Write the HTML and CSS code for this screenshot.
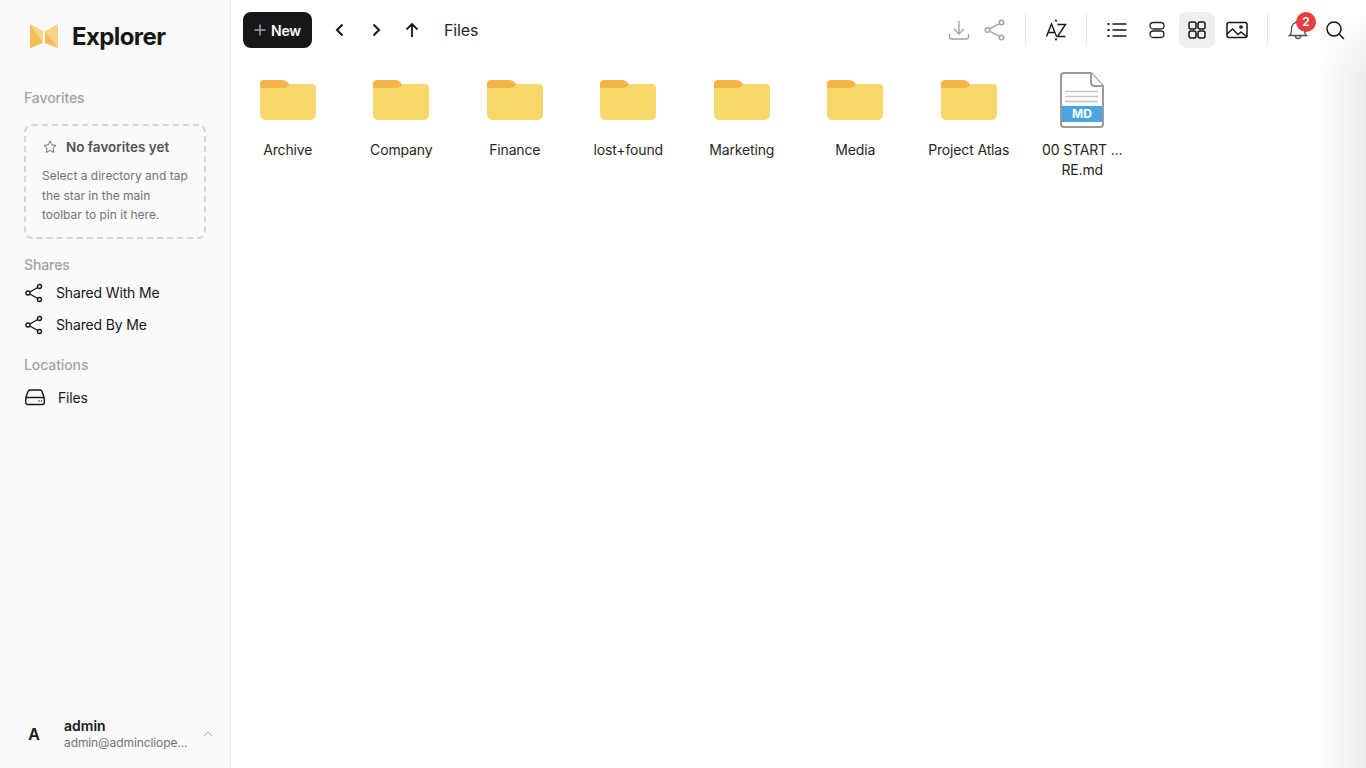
FILE: index.html
```html
<!DOCTYPE html>
<html lang="en">
<head>
	<meta charset="UTF-8">
	<title>Explorer</title>
	<link rel="stylesheet" href="styles.css">
</head>
<body>
	<div class="app">
		<aside class="sidebar">
			<div class="brand">
				<svg class="brand-logo" width="28" height="24" viewBox="0 0 28 24">
					<path fill="#f8d584" d="M0 0 L13 7 V19 L0 24 Z"/>
					<path fill="#f3bd5c" d="M0 0 L13 19 L0 24 Z"/>
					<path fill="#f8d584" d="M28 0 L15 7 V19 L28 24 Z"/>
					<path fill="#f3bd5c" d="M15 7 L28 24 L15 19 Z"/>
				</svg>
				<span class="brand-name">Explorer</span>
			</div>

			<h2 class="side-title">Favorites</h2>
			<div class="fav-box">
				<div class="fav-head">
					<svg width="16" height="16" viewBox="0 0 24 24" fill="none" stroke="#737373" stroke-width="1.5" stroke-linejoin="round"><path d="M12 3l2.700 5.800 6.300.8-4.600 4.300 1.200 6.300L12 17.100 6.400 20.200l1.200-6.300L3 9.600l6.300-.8z"/></svg>
					<span>No favorites yet</span>
				</div>
				<p>Select a directory and tap the star in the main toolbar to pin it here.</p>
			</div>

			<h2 class="side-title shares">Shares</h2>
			<a class="side-link">
				<svg class="share-icon" width="20" height="20" viewBox="0 0 20 20" fill="none" stroke="#171717" stroke-width="1.4"><circle cx="4" cy="10" r="2"/><circle cx="15.500" cy="3.500" r="2"/><circle cx="15.500" cy="16.500" r="2"/><path d="M5.800 9 13.700 4.500M5.800 11l7.900 4.500"/></svg>
				<span>Shared With Me</span>
			</a>
			<a class="side-link">
				<svg class="share-icon" width="20" height="20" viewBox="0 0 20 20" fill="none" stroke="#171717" stroke-width="1.4"><circle cx="4" cy="10" r="2"/><circle cx="15.500" cy="3.500" r="2"/><circle cx="15.500" cy="16.500" r="2"/><path d="M5.800 9 13.700 4.500M5.800 11l7.900 4.500"/></svg>
				<span>Shared By Me</span>
			</a>

			<h2 class="side-title locations">Locations</h2>
			<a class="side-link files-link">
				<svg width="22" height="20" viewBox="0 0 22 20" fill="none" stroke="#171717" stroke-width="1.4" stroke-linejoin="round"><path d="M1.700 11 4 4.500Q4.400 3 6 3h10q1.600 0 2 1.500L20.300 11"/><rect x="1.700" y="10.500" width="18.600" height="7" rx="2"/><path d="M15 14h.01M17.500 14h.01" stroke-linecap="round"/></svg>
				<span>Files</span>
			</a>

			<div class="user">
				<div class="user-avatar">A</div>
				<div class="user-info">
					<div class="user-name">admin</div>
					<div class="user-mail">admin@admincliope...</div>
				</div>
				<svg class="user-arrow" width="12" height="12" viewBox="0 0 12 12" fill="none" stroke="#a3a3a3" stroke-width="1"><path d="M2 8l4-4 4 4"/></svg>
			</div>
		</aside>

		<main class="main">
			<div class="toolbar">
				<button class="btn-new">
					<svg width="14" height="14" viewBox="0 0 14 14" stroke="#a3a3a3" stroke-width="1.500"><path d="M7 1.500v11M1.500 7h11"/></svg>
					<span>New</span>
				</button>
				<div class="tool-group nav-group">
					<button class="tool"><svg width="20" height="20" viewBox="0 0 20 20" fill="none" stroke="#171717" stroke-width="2"><path d="M12.500 4.500 7 10l5.500 5.500"/></svg></button>
					<button class="tool"><svg width="20" height="20" viewBox="0 0 20 20" fill="none" stroke="#171717" stroke-width="2"><path d="M7.500 4.500 13 10l-5.500 5.500"/></svg></button>
					<button class="tool"><svg width="20" height="20" viewBox="0 0 20 20" fill="none" stroke="#171717" stroke-width="1.800"><path d="M10 17V4M4.500 9.500 10 4l5.500 5.500"/></svg></button>
				</div>
				<span class="crumb">Files</span>

				<div class="tool-group tools-right">
					<button class="tool"><svg width="22" height="22" viewBox="0 0 22 22" fill="none" stroke="#a3a3a3" stroke-width="1.400"><path d="M11 2v13M6 10l5 5 5-5M1.500 15v3q0 2 2 2h15q2 0 2-2v-3"/></svg></button>
					<button class="tool"><svg width="22" height="22" viewBox="0 0 22 22" fill="none" stroke="#a3a3a3" stroke-width="1.400"><circle cx="3.500" cy="11" r="2.300"/><circle cx="17.500" cy="3.500" r="2.300"/><circle cx="17.500" cy="18.500" r="2.300"/><path d="M5.500 9.900 15.500 4.600M5.500 12.100l10 5.300"/></svg></button>
				</div>
				<div class="divider"></div>
				<button class="tool">
					<svg width="24" height="24" viewBox="0 0 24 24" fill="none" stroke="#171717" stroke-width="1.400"><path d="M2.500 18.500 7.500 6l5 12.500M4.300 14.500h6.400M13.500 6.500h8l-8 12h8"/><path d="M11 3.500 12 2l1 1.500M11 20.500l1 1.500 1-1.500" stroke-width="1.200"/></svg>
				</button>
				<div class="divider"></div>
				<div class="tool-group view-group">
					<button class="tool"><svg width="22" height="22" viewBox="0 0 22 22" fill="none" stroke="#171717" stroke-width="1.500"><path d="M6.500 5h14M6.500 11h14M6.500 17h14"/><path d="M1.500 5h2M1.500 11h2M1.500 17h2" stroke-width="2"/></svg></button>
					<button class="tool"><svg width="22" height="22" viewBox="0 0 22 22" fill="none" stroke="#262626" stroke-width="1.300"><rect x="4" y="3.500" width="14" height="6.500" rx="3.200"/><rect x="4" y="12" width="14" height="6.500" rx="3.200"/></svg></button>
					<button class="tool active"><svg width="22" height="22" viewBox="0 0 22 22" fill="none" stroke="#171717" stroke-width="1.500"><rect x="3" y="3" width="7" height="7" rx="2"/><rect x="12" y="3" width="7" height="7" rx="2"/><rect x="3" y="12" width="7" height="7" rx="2"/><rect x="12" y="12" width="7" height="7" rx="2"/></svg></button>
					<button class="tool"><svg width="22" height="22" viewBox="0 0 22 22" fill="none" stroke="#171717" stroke-width="1.500"><rect x="1" y="3.500" width="20" height="15" rx="2"/><path d="M1 15l5.500-5 5.500 5.500 3-2.500 6 5"/><circle cx="15" cy="8" r="1.100"/></svg></button>
				</div>
				<div class="divider"></div>
				<button class="tool bell">
					<svg width="22" height="22" viewBox="0 0 22 22" fill="none" stroke="#525252" stroke-width="1.300"><path d="M2.500 16.500q2-1.500 2-5V9.500a6.500 6.500 0 0 1 13 0v2q0 3.500 2 5z"/><path d="M8.500 17a2.500 2.500 0 0 0 5 0"/></svg>
					<span class="badge">2</span>
				</button>
				<button class="tool"><svg width="22" height="22" viewBox="0 0 22 22" fill="none" stroke="#171717" stroke-width="1.500"><circle cx="10" cy="10" r="7"/><path d="M15 15l5 5"/></svg></button>
			</div>

			<div class="grid">
				<div class="item"><div class="icon"><svg class="folder" width="56" height="40" viewBox="0 0 56 40"><use href="#folder"/></svg></div><div class="label">Archive</div></div>
				<div class="item"><div class="icon"><svg class="folder" width="56" height="40" viewBox="0 0 56 40"><use href="#folder"/></svg></div><div class="label">Company</div></div>
				<div class="item"><div class="icon"><svg class="folder" width="56" height="40" viewBox="0 0 56 40"><use href="#folder"/></svg></div><div class="label">Finance</div></div>
				<div class="item"><div class="icon"><svg class="folder" width="56" height="40" viewBox="0 0 56 40"><use href="#folder"/></svg></div><div class="label">lost+found</div></div>
				<div class="item"><div class="icon"><svg class="folder" width="56" height="40" viewBox="0 0 56 40"><use href="#folder"/></svg></div><div class="label">Marketing</div></div>
				<div class="item"><div class="icon"><svg class="folder" width="56" height="40" viewBox="0 0 56 40"><use href="#folder"/></svg></div><div class="label">Media</div></div>
				<div class="item"><div class="icon"><svg class="folder" width="56" height="40" viewBox="0 0 56 40"><use href="#folder"/></svg></div><div class="label">Project Atlas</div></div>
				<div class="item">
					<div class="icon">
						<svg width="44" height="56" viewBox="0 0 44 56">
							<path fill="#fff" stroke="#9a9a9a" stroke-width="2" d="M4 1h27l12 13v38q0 3-3 3H4q-3 0-3-3V4q0-3 3-3z"/>
							<path fill="#fff" stroke="#9a9a9a" stroke-width="2" stroke-linejoin="round" d="M31 1v9q0 4 4 4h8"/>
							<path stroke="#c4c4c4" stroke-width="1.500" d="M5 19.500h33M5 24.500h33M5 29.500h33"/>
							<rect x="2" y="34" width="40" height="16" fill="#4aa3e3"/>
							<text class="md-text" x="22" y="46" text-anchor="middle">MD</text>
						</svg>
					</div>
					<div class="label">00 START ...<br>RE.md</div>
				</div>
			</div>
		</main>
	</div>

	<svg class="defs" width="0" height="0">
		<defs>
			<g id="folder">
				<path fill="#f5b546" d="M4 0h18q3 0 5 2l4 4v6H0V4q0-4 4-4z"/>
				<path fill="#f8d76a" d="M0 8h23q3 0 5-2l1-2h23q4 0 4 4v26q0 6-6 6H6q-6 0-6-6z"/>
			</g>
		</defs>
	</svg>
</body>
</html>
```

FILE: styles.css
```css
*{margin:0; padding:0; box-sizing:border-box;}
body{
	font-family:Inter,"Liberation Sans",sans-serif;
	font-size:14px;
	color:#171717;
	background:#fff;
	overflow:hidden;
}
button{border:none; background:none; font-family:inherit; color:inherit;}
.defs{position:absolute;}
.app{
	display:flex;
	height:768px;
}

.sidebar{
	width:231px;
	flex:none;
	display:flex;
	flex-direction:column;
	background:#fafafa;
	border-right:solid 1px #e9e9e9;
	padding:0 24px;
}
.brand{
	display:flex;
	align-items:center;
	height:24px;
	margin-top:24px;
	padding-left:6px;
}
.brand-logo{margin-right:14px;}
.brand-name{
	font-size:24px;
	font-weight:700;
	letter-spacing:-0.6px;
}
.side-title{
	font-size:14px;
	font-weight:500;
	line-height:20px;
	letter-spacing:-0.1px;
	color:#a3a3a3;
}
.side-title:first-of-type{margin-top:40px;}
.fav-box{
	width:182px;
	height:115px;
	margin-top:16px;
	padding:9px 12px 0 16px;
	border:dashed 2px #d8d8d8;
	border-radius:8px;
}
.fav-head{
	display:flex;
	align-items:center;
	gap:8px;
	height:24px;
	color:#525252;
	font-size:13.500px;
	font-weight:600;
}
.fav-box p{
	margin-top:7px;
	font-size:12px;
	line-height:19.500px;
	color:#737373;
}
.shares{margin-top:16px;}
.locations{margin-top:15px;}
.side-link{
	display:flex;
	align-items:center;
	gap:12px;
	height:32px;
	font-size:14px;
	letter-spacing:-0.15px;
}
.share-icon{margin-top:2px;}
.shares + .side-link{margin-top:1px;}
.files-link{margin-top:6px;}
.user{
	display:flex;
	align-items:center;
	margin-top:auto;
	height:36px;
	margin-bottom:16px;
}
.user-avatar{
	width:20px;
	margin-right:20px;
	text-align:center;
	font-size:16px;
	font-weight:600;
}
.user-info{flex:1;}
.user-name{font-size:14px; font-weight:600; line-height:18px;}
.user-mail{font-size:12px; color:#737373; line-height:16px; white-space:nowrap; letter-spacing:-0.1px;}
.user-arrow{flex:none; margin-right:-8px;}

.main{
	flex:1;
	min-width:0;
	position:relative;
}
/* faint shade down the right edge */
.main::after{
	content:"";
	position:absolute;
	top:0;
	right:0;
	bottom:0;
	width:50px;
	pointer-events:none;
	background:linear-gradient(to right,rgba(0,0,0,0),rgba(0,0,0,0.08));
	-webkit-mask-image:linear-gradient(to bottom,transparent 10px,#000 80px);
	mask-image:linear-gradient(to bottom,transparent 10px,#000 80px);
}
.toolbar{
	display:flex;
	align-items:center;
	height:60px;
	padding:0 13px 0 12px;
}
.btn-new{
	display:flex;
	align-items:center;
	gap:4px;
	width:69px;
	height:36px;
	padding-left:10px;
	background:#171717;
	border-radius:8px;
	color:#fff;
	font-size:14px;
	font-weight:600;
	letter-spacing:-0.2px;
}
.tool-group{display:flex;}
.nav-group{margin-left:10px;}
.view-group{gap:4px;}
.tool{
	position:relative;
	display:flex;
	align-items:center;
	justify-content:center;
	width:36px;
	height:36px;
	flex:none;
	border-radius:8px;
}
.tool.active{background:#efefef;}
.crumb{margin-left:14px; font-size:16px; color:#262626; letter-spacing:-0.15px;}
.tools-right{margin-left:auto;}
.divider{
	width:1px;
	height:32px;
	flex:none;
	background:#e5e5e5;
	margin:0 12px;
}
.bell{margin-right:1px;}
.badge{
	position:absolute;
	top:0;
	right:0;
	width:20px;
	height:20px;
	border-radius:50%;
	background:#e53e3e;
	color:#fff;
	font-size:12px;
	font-weight:600;
	line-height:20px;
	text-align:center;
}

.grid{
	display:grid;
	grid-template-columns:repeat(auto-fill,113.5px);
	padding-top:8px;
}
.item{
	display:flex;
	flex-direction:column;
	align-items:center;
}
.icon{
	display:flex;
	align-items:center;
	justify-content:center;
	height:64px;
	margin-bottom:8px;
}
.label{
	font-size:14px;
	line-height:20px;
	letter-spacing:-0.15px;
	text-align:center;
	color:#262626;
}
.md-text{
	font-family:Inter,"Liberation Sans",sans-serif;
	font-size:12px;
	font-weight:700;
	fill:#fff;
}
```
